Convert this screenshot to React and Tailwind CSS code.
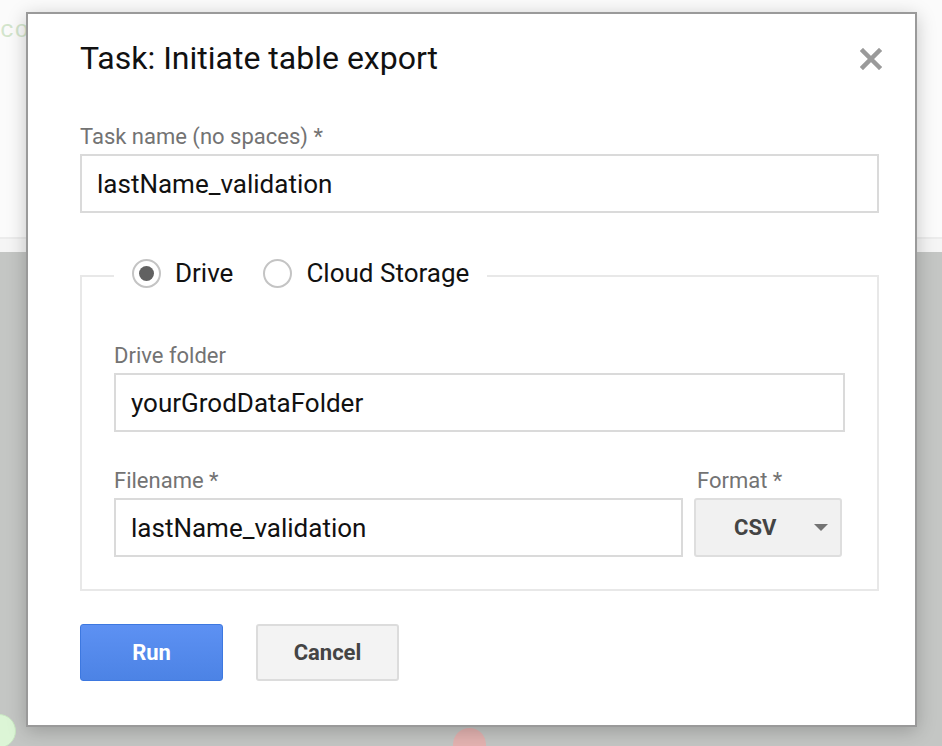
import React, { useState } from 'react';

const Radio = ({ checked, onClick, label }) => (
  <button type="button" onClick={onClick} className="flex items-center gap-[14px] cursor-pointer">
    <span className="w-[29px] h-[29px] rounded-full border-2 border-[#c4c4c4] bg-white flex items-center justify-center">
      {checked && <span className="w-[15px] h-[15px] rounded-full bg-[#616161]" />}
    </span>
    <span className="text-[26px] leading-[36px] text-[#111]">{label}</span>
  </button>
);

const Field = ({ label, value, className = '' }) => (
  <div className={className}>
    <div className="text-[22px] leading-[26px] text-[#737373] mb-[4px]">{label}</div>
    <input
      defaultValue={value}
      className="w-full h-[59px] border-2 border-[#dadada] bg-white px-[15px] text-[26px] text-[#111] outline-none"
    />
  </div>
);

export default function App() {
  const [dest, setDest] = useState('drive');

  return (
    <div className="relative w-[942px] h-[746px] overflow-hidden flex flex-col" style={{ fontFamily: 'Roboto, "Noto Sans", sans-serif' }}>
      {/* page underneath */}
      <div className="h-[237px] bg-[#fbfbfb] pt-[16px]">
        <span className="text-[24px] leading-[30px] text-[#d3e5cc]" style={{ fontFamily: '"Liberation Mono", monospace' }}>co</span>
      </div>
      <div className="h-[15px] bg-[#f5f5f5] border-t-2 border-[#ececec]" />
      <div className="flex-1 bg-[#c4c6c4]" />

      {/* map markers */}
      <div className="absolute left-[-18px] top-[714px] w-[34px] h-[34px] rounded-full bg-[#dcf5d6] border border-[#c9e8c2]" />
      <div className="absolute left-[453px] top-[728px] w-[33px] h-[33px] rounded-full bg-[#e4b3b1]" />

      {/* dialog */}
      <div className="absolute left-[26px] top-[12px] w-[891px] h-[715px] bg-white border-2 border-[#9a9a9a] shadow-[0_4px_18px_rgba(0,0,0,0.22)] pt-[26px] pl-[52px] pr-[36px]">
        <button type="button" className="absolute right-[33px] top-[34px] w-[22px] h-[22px]">
          <svg viewBox="0 0 22 22" className="w-[22px] h-[22px]">
            <path d="M3 3 L19 19 M19 3 L3 19" stroke="#9a9a9a" strokeWidth="4.5" strokeLinecap="square" />
          </svg>
        </button>

        <h2 className="text-[32px] leading-[36px] text-[#111]">Task: Initiate table export</h2>

        <Field label="Task name (no spaces) *" value="lastName_validation" className="mt-[48px]" />

        <fieldset className="mt-[42px] border-2 border-[#e8e8e8] px-[32px] pb-[32px]">
          <legend className="ml-0 px-[18px] pb-[6px] flex items-center">
            <Radio checked={dest === 'drive'} onClick={() => setDest('drive')} label="Drive" />
            <span className="w-[30px]" />
            <Radio checked={dest === 'cloud'} onClick={() => setDest('cloud')} label="Cloud Storage" />
          </legend>

          <Field label="Drive folder" value="yourGrodDataFolder" className="mt-[46px]" />

          <div className="flex gap-[11px] mt-[36px] pr-[3px]">
            <Field label="Filename *" value="lastName_validation" className="flex-1" />
            <div className="w-[148px]">
              <div className="text-[22px] leading-[26px] text-[#737373] mb-[4px] pl-[3px]">Format *</div>
              <div className="h-[59px] bg-[#f1f1f1] border-2 border-[#dedede] rounded-[3px] flex items-center justify-between pl-[38px] pr-[12px]">
                <span className="text-[22px] font-bold text-[#444]">CSV</span>
                <svg viewBox="0 0 14 7" className="w-[14px] h-[7px]">
                  <path d="M0 0 L14 0 L7 7 Z" fill="#737373" />
                </svg>
              </div>
            </div>
          </div>
        </fieldset>

        <div className="flex gap-[33px] mt-[33px]">
          <button type="button" className="w-[143px] h-[57px] rounded-[3px] border border-[#3d78e0] bg-gradient-to-b from-[#5d91f3] to-[#4c83e5] text-white text-[22px] font-bold">
            Run
          </button>
          <button type="button" className="w-[143px] h-[57px] rounded-[3px] border-2 border-[#dcdcdc] bg-[#f3f3f3] text-[#444] text-[22px] font-bold">
            Cancel
          </button>
        </div>
      </div>
    </div>
  );
}
